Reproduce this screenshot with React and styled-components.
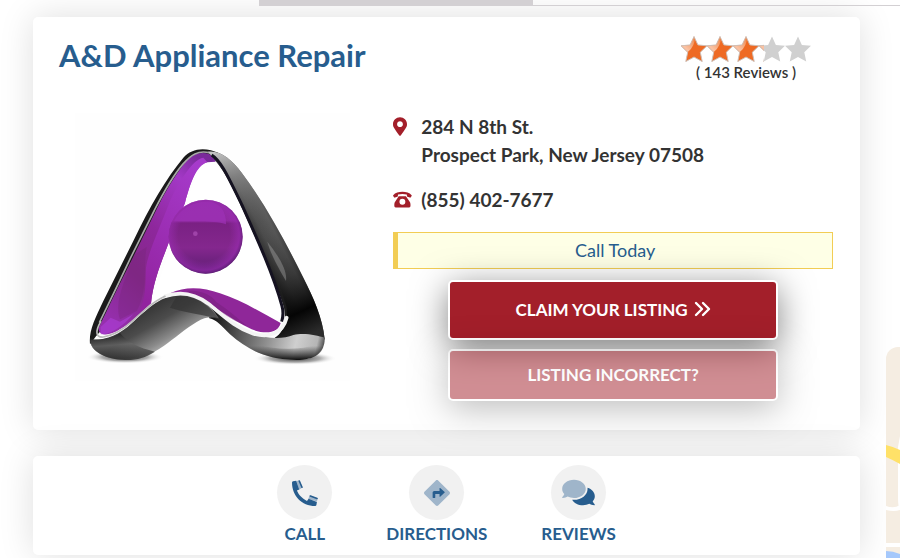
import React from "react";
import styled, { createGlobalStyle, css } from "styled-components";
import { FaMapMarkerAlt } from "react-icons/fa";

const STAR = "M12 0.5 L15.6 8.2 L24 9.1 L17.8 15 L19.6 23.6 L12 19.4 L4.4 23.6 L6.2 15 L0 9.1 L8.4 8.2 Z";

const Star = ({ index, fill }) => (
  <svg width="26" height="26" viewBox="0 0 24 24" aria-hidden="true">
    <defs>
      <linearGradient id={`shine${index}`} x1="0.8" y1="0" x2="0" y2="1">
        <stop offset="0" stopColor="#f0874a" />
        <stop offset="0.6" stopColor="#fac3a4" />
        <stop offset="1" stopColor="#f5a57c" />
      </linearGradient>
      <clipPath id={`part${index}`}>
        <rect x="-1" y="0" width={fill * 26} height="25" />
      </clipPath>
      <clipPath id={`star${index}`}>
        <path d={STAR} />
      </clipPath>
    </defs>
    <path d={STAR} fill="#d0d0d0" />
    <g clipPath={`url(#part${index})`}>
      <path d={STAR} fill="#ee6a24" />
      <g clipPath={`url(#star${index})`}>
        <path d="M-1 0 H13 Q13 10 6 15 L-1 17 Z" fill={`url(#shine${index})`} />
      </g>
      <path d={STAR} fill="none" stroke="#cfc0b8" strokeWidth="0.9" />
    </g>
  </svg>
);

const PhoneRotary = () => (
  <svg width="19" height="17" viewBox="0 0 20 17" aria-hidden="true">
    <path
      fill="currentColor"
      fillRule="evenodd"
      d="M6 5.2H13.6L17.4 10.6Q18.4 12 18.4 13.4V15.3Q18.4 16.8 17 16.8H2.8Q1.4 16.8 1.4 15.3V13.4Q1.4 12 2.4 10.6ZM9.9 7.7A3.1 3.1 0 1 0 9.9 13.9A3.1 3.1 0 1 0 9.9 7.7Z"
    />
    <path
      fill="currentColor"
      d="M0.2 3.9C4.6-0.7 15.2-0.7 19.6 3.9Q19.9 4.3 19.6 4.8L18.7 6.2Q18.3 6.7 17.7 6.5L15.2 5.5Q14.7 5.2 14.7 4.7L14.5 3.3Q9.9 1.9 5.3 3.3L5.1 4.7Q5.1 5.2 4.6 5.5L2.1 6.5Q1.5 6.7 1.1 6.2L0.2 4.8Q-0.1 4.3 0.2 3.9Z"
    />
  </svg>
);

const Chevrons = () => (
  <svg width="17" height="16" viewBox="0 0 17 16" fill="none" stroke="currentColor" strokeWidth="2.4" strokeLinecap="round" strokeLinejoin="round" aria-hidden="true">
    <path d="M2 2L8 8L2 14M9 2L15 8L9 14" />
  </svg>
);

const CallIcon = () => (
  <svg width="26" height="26" viewBox="0 0 26 26" aria-hidden="true">
    <path fill="#9fb5ca" d="M4.4 1L7.4 0.4L10.6 7.6L7 9.8ZM16.4 19L17.6 15.2L25.6 18.2L25 21.6Z" />
    <path
      fill="#275d8e"
      d="M1 1.3L4.2 0.7L7.2 9.4L4.9 10.6C6.6 14.9 10.6 19 15 20.9L16.6 18.8L24.9 22L24.4 25Q24.2 26 23.2 26C9.6 26 0 15.7 0 2.5Q0 1.6 1 1.3Z"
    />
    <path stroke="#275d8e" strokeWidth="1.6" strokeLinecap="round" d="M7.3 1L10 7.2M18.4 16L25 18.4" />
  </svg>
);

const DirectionsIcon = () => (
  <svg width="26" height="26" viewBox="0 0 512 512" aria-hidden="true">
    <path
      fill="#9fb5ca"
      d="M502.6 233.3L278.7 9.4c-12.5-12.5-32.8-12.5-45.4 0L9.4 233.3c-12.5 12.5-12.5 32.8 0 45.4l223.9 223.9c12.5 12.5 32.8 12.5 45.4 0l223.9-223.9c12.5-12.5 12.5-32.8 0-45.4z"
    />
    <path
      fill="#275d8e"
      d="M407 246l-88 84c-5 5-13 1-13-6V276h-84v68c0 5-3 8-8 8h-36c-5 0-8-3-8-8v-96c0-18 14-32 32-32h104v-52c0-7 8-11 13-6l88 76c4 3 4 9 0 12z"
    />
  </svg>
);

const ReviewsIcon = () => (
  <svg width="33" height="29" viewBox="0 0 576 512" aria-hidden="true">
    <path
      fill="#9fb5ca"
      d="M416 192c0-88.4-93.1-160-208-160S0 103.6 0 192c0 34.3 14.1 65.9 38 92-13.4 30.2-35.5 54.2-35.8 54.5-2.2 2.3-2.8 5.7-1.5 8.7S4.8 352 8 352c36.6 0 66.9-12.3 88.7-25 32.2 15.7 70.3 25 111.3 25 114.9 0 208-71.6 208-160z"
    />
    <path
      fill="#275d8e"
      d="M538 412c23.9-26 38-57.7 38-92 0-66.9-53.5-124.2-129.3-148.1.9 6.6 1.3 13.3 1.3 20.1 0 105.9-107.7 192-240 192-10.8 0-21.3-.8-31.7-1.9C207.8 439.6 281.8 480 368 480c41 0 79.1-9.2 111.3-25 21.8 12.7 52.1 25 88.7 25 3.2 0 6.1-1.9 7.3-4.8 1.3-2.9.7-6.3-1.5-8.7-.3-.2-22.4-24.2-35.8-54.5z"
    />
  </svg>
);

const CompanyLogo = () => (
  <svg width="280" height="268" viewBox="0 6 840 804" role="img" aria-label="A&D Appliance Repair logo">
    <defs>
      <linearGradient id="leftPurple" x1="0.8" y1="0" x2="0.2" y2="1">
        <stop offset="0" stopColor="#7a2a9a" />
        <stop offset="0.15" stopColor="#a338c6" />
        <stop offset="0.45" stopColor="#8e279c" />
        <stop offset="0.7" stopColor="#842889" />
        <stop offset="1" stopColor="#962fae" />
      </linearGradient>
      <linearGradient id="bandGlow" x1="0.7" y1="0" x2="0.3" y2="1">
        <stop offset="0" stopColor="#a63acb" />
        <stop offset="1" stopColor="#92239f" />
      </linearGradient>
      <linearGradient id="rightBand" gradientUnits="userSpaceOnUse" x1="560" y1="400" x2="650" y2="355">
        <stop offset="0" stopColor="#1c1c1c" />
        <stop offset="0.3" stopColor="#4c4c4c" />
        <stop offset="0.65" stopColor="#5e5e5e" />
        <stop offset="1" stopColor="#242424" />
      </linearGradient>
      <linearGradient id="rightShade" gradientUnits="userSpaceOnUse" x1="440" y1="120" x2="700" y2="680">
        <stop offset="0" stopColor="#c4c4c4" />
        <stop offset="0.15" stopColor="#8c8c8c" stopOpacity="0.8" />
        <stop offset="0.4" stopColor="#555" stopOpacity="0.3" />
        <stop offset="0.7" stopColor="#222" stopOpacity="0.6" />
        <stop offset="0.88" stopColor="#050505" />
        <stop offset="1" stopColor="#2b2b2b" />
      </linearGradient>
      <linearGradient id="rightFoot" gradientUnits="userSpaceOnUse" x1="430" y1="620" x2="765" y2="700">
        <stop offset="0" stopColor="#161616" />
        <stop offset="0.25" stopColor="#555" />
        <stop offset="0.5" stopColor="#8f8f8f" />
        <stop offset="0.75" stopColor="#cfcfcf" />
        <stop offset="0.93" stopColor="#b5b5b5" />
        <stop offset="1" stopColor="#444" />
      </linearGradient>
      <linearGradient id="footUnder" x1="0" y1="0" x2="0" y2="1">
        <stop offset="0.45" stopColor="#222" stopOpacity="0" />
        <stop offset="1" stopColor="#0c0c0c" />
      </linearGradient>
      <linearGradient id="wave" gradientUnits="userSpaceOnUse" x1="210" y1="580" x2="290" y2="720">
        <stop offset="0" stopColor="#2e2e2e" />
        <stop offset="0.45" stopColor="#4c4c4c" />
        <stop offset="0.8" stopColor="#8b8b8b" />
        <stop offset="1" stopColor="#bbb" />
      </linearGradient>
      <linearGradient id="leftFoot" x1="0" y1="0" x2="0.2" y2="1">
        <stop offset="0" stopColor="#000" />
        <stop offset="0.5" stopColor="#6a6a6a" />
        <stop offset="1" stopColor="#0a0a0a" />
      </linearGradient>
      <linearGradient id="ball" x1="0" y1="0" x2="0" y2="1">
        <stop offset="0" stopColor="#8e2ba0" />
        <stop offset="0.28" stopColor="#902aa0" />
        <stop offset="0.32" stopColor="#7a2183" />
        <stop offset="0.65" stopColor="#84278e" />
        <stop offset="1" stopColor="#5a1d70" />
      </linearGradient>
      <radialGradient id="ballEdge" cx="0.48" cy="0.48" r="0.54">
        <stop offset="0.65" stopColor="#9a2db2" stopOpacity="0" />
        <stop offset="0.88" stopColor="#9a2cb2" stopOpacity="0.6" />
        <stop offset="1" stopColor="#4c1a66" stopOpacity="0.7" />
      </radialGradient>
      <radialGradient id="ground">
        <stop offset="0" stopColor="#222" />
        <stop offset="0.6" stopColor="#777" stopOpacity="0.6" />
        <stop offset="1" stopColor="#fff" stopOpacity="0" />
      </radialGradient>
    </defs>

    <rect x="16" y="6" width="824" height="804" fill="#fefefe" />
    <ellipse cx="165" cy="738" rx="115" ry="20" fill="url(#ground)" />
    <ellipse cx="675" cy="742" rx="125" ry="20" fill="url(#ground)" />

    <path
      fill="#1a1a1a"
      d="M340 140C365 112 405 106 450 128L425 150C395 150 375 165 352 210L110 640L78 676L60 700C56 660 74 625 100 570L190 390C240 285 290 200 340 140Z"
    />
    <path
      fill="#fff"
      d="M432 150C400 146 378 185 345 290L243 577C300 535 340 526 390 532C460 538 545 590 625 632C640 620 638 585 630 560C590 430 500 250 432 150Z"
    />
    <path
      fill="url(#leftPurple)"
      d="M440 142C405 116 370 124 346 154C310 200 285 245 262 290L190 437C150 515 115 590 86 650C84 676 118 676 150 655C180 640 215 605 243 577C250 505 280 440 296 395C315 360 335 300 345 275C362 215 378 160 412 154L436 152Z"
    />
    <path fill="url(#bandGlow)" d="M400 140C365 145 320 225 300 270C270 350 235 420 228 470C225 520 230 560 205 605L243 577C250 505 280 440 296 395C320 350 335 300 345 275C362 215 378 165 412 154Z" />
    <path fill="#762479" opacity="0.35" d="M192 432L230 408C218 470 235 540 200 600L150 625C130 570 170 500 192 432Z" />
    <path fill="#ad40d7" opacity="0.6" d="M92 648L122 620L150 632L190 610C160 645 120 672 92 670Z" />
    <path fill="none" stroke="#a8a8a8" strokeWidth="5" d="M420 126C385 116 362 132 338 160C300 205 275 255 252 300L182 440C150 508 115 580 88 635" />

    <circle cx="407" cy="377" r="111" fill="url(#ball)" />
    <path fill="#a233bc" opacity="0.6" d="M312 331C332 290 375 270 420 272C448 276 470 300 468 340C440 328 380 333 312 331Z" />
    <circle cx="407" cy="377" r="111" fill="url(#ballEdge)" />
    <circle cx="376" cy="368" r="7" fill="#b558c0" opacity="0.6" />

    <path
      fill="#8f2799"
      d="M300 547C350 524 400 530 450 547C510 566 570 602 632 636C625 665 590 672 545 655C480 627 425 572 350 547Z"
    />
    <path fill="#6d1e74" opacity="0.4" d="M350 540C390 535 425 552 438 572C480 600 500 620 530 644C470 625 430 580 350 547Z" />

    <path
      fill="url(#rightBand)"
      d="M412 122C450 116 485 145 515 185C590 285 650 400 700 500C730 560 758 620 764 685C740 700 640 700 610 684C640 665 650 640 642 590C625 530 570 410 520 300C490 235 462 170 412 122Z"
    />
    <path
      fill="url(#rightShade)"
      d="M412 122C450 116 485 145 515 185C590 285 650 400 700 500C730 560 758 620 764 685C740 700 640 700 610 684C640 665 655 640 650 590C635 530 575 410 525 300C495 235 462 165 412 122Z"
    />
    <path fill="#bbb" opacity="0.35" d="M592 392C630 440 652 480 648 510C630 480 602 430 592 392Z" />
    <path fill="none" stroke="#151221" strokeWidth="9" d="M425 132C455 150 480 210 515 280C560 380 610 490 636 585C640 600 640 615 635 632" />

    <path
      fill="url(#rightFoot)"
      d="M400 570C440 590 480 640 535 664C590 686 640 684 670 672C700 664 740 672 764 680C766 722 735 747 680 747C590 745 535 718 480 670C455 645 440 626 418 622Z"
    />
    <path
      fill="url(#footUnder)"
      d="M480 670C560 715 690 730 764 690C764 724 735 747 680 747C590 745 535 718 480 670Z"
    />

    <path
      fill="url(#wave)"
      d="M62 686C100 690 145 675 185 637C240 585 285 545 345 552C390 556 420 580 446 622C425 616 405 618 380 633C310 675 250 750 165 747C110 746 58 720 62 686Z"
    />
    <path fill="#333" opacity="0.7" d="M320 556C380 552 415 580 452 628C420 612 370 612 300 590Z" />
    <path
      fill="url(#leftFoot)"
      d="M60 682C95 690 130 680 150 666C175 695 205 710 255 722C225 740 200 748 165 747C110 746 56 722 60 682Z"
      opacity="0.6"
    />
    <path
      fill="none"
      stroke="#f4f4f4"
      strokeWidth="11"
      strokeLinecap="round"
      d="M285 556C330 540 375 548 415 578C460 614 495 650 550 668C600 682 638 666 650 620"
    />
    <path fill="none" stroke="#bbb" strokeWidth="5" strokeLinecap="round" d="M92 632C76 660 76 680 100 678C128 674 160 655 185 632C220 600 250 572 285 556" />
  </svg>
);

const MapPreview = () => (
  <svg width="100%" height="100%" viewBox="0 0 14 211" preserveAspectRatio="xMinYMin slice" aria-hidden="true">
    <rect width="14" height="211" fill="#f5ede2" />
    <path d="M14 89V163Q12 160 12 150V100Z" fill="#fff" />
    <path d="M0 159Q8 162 14 158V163Q8 165 0 163ZM0 196H14V200H0Z" fill="#fff" />
    <path d="M0 98Q8 100 14 103V117Q7 113 0 110Z" fill="#ffe168" />
    <path d="M0 204Q7 204 14 207V211H0Z" fill="#a5c8fb" />
  </svg>
);

const actions = [
  { label: "CALL", icon: <CallIcon /> },
  { label: "DIRECTIONS", icon: <DirectionsIcon /> },
  { label: "REVIEWS", icon: <ReviewsIcon /> },
];

const App = () => {
  return (
    <>
      <GlobalStyle />
      <TopBar>
        <ActiveTab />
        <TabLine />
      </TopBar>
      <Page>
        <Main>
          <Card>
            <CardHeader>
              <Title>A&amp;D Appliance Repair</Title>
              <Rating>
                <Stars role="img" aria-label="3.2 out of 5 stars">
                  {[1, 1, 1, 0.22, 0].map((fill, i) => (
                    <Star key={i} index={i} fill={fill} />
                  ))}
                </Stars>
                <ReviewCount>( 143 Reviews )</ReviewCount>
              </Rating>
            </CardHeader>
            <CardBody>
              <LogoWrapper>
                <CompanyLogo />
              </LogoWrapper>
              <div>
                <ContactList>
                  <ContactRow>
                    <ContactIcon>
                      <Pin />
                    </ContactIcon>
                    <Address>
                      284 N 8th St.
                      <br />
                      Prospect Park, New Jersey 07508
                    </Address>
                  </ContactRow>
                  <ContactRow>
                    <ContactIcon>
                      <PhoneRotary />
                    </ContactIcon>
                    <PhoneLink href="tel:8554027677">(855) 402-7677</PhoneLink>
                  </ContactRow>
                </ContactList>
                <Callout>Call Today</Callout>
                <Buttons>
                  <ListingButton type="button">
                    CLAIM YOUR LISTING <Chevrons />
                  </ListingButton>
                  <ListingButton type="button" $muted>
                    LISTING INCORRECT?
                  </ListingButton>
                </Buttons>
              </div>
            </CardBody>
          </Card>
          <ActionCard>
            {actions.map(({ label, icon }) => (
              <Action key={label} href={`#${label.toLowerCase()}`}>
                <ActionIcon>{icon}</ActionIcon>
                {label}
              </Action>
            ))}
          </ActionCard>
        </Main>
        <Side>
          <MapPreview />
        </Side>
      </Page>
    </>
  );
};

const GlobalStyle = createGlobalStyle`
  * {
    box-sizing: border-box;
  }

  body {
    margin: 0;
    background: #fff;
    color: #333;
    font-family: Lato, "Open Sans", sans-serif;
    overflow-x: hidden;
  }
`;

const TopBar = styled.div`
  position: relative;
  z-index: 1;
  display: flex;
  height: 6px;
  padding-left: 259px;
`;

const ActiveTab = styled.div`
  width: 274px;
  background: #d3d0d3;
`;

const TabLine = styled.div`
  flex: 1;
  border-bottom: 1px solid #d3d0d3;
`;

const Page = styled.div`
  display: flex;
  gap: 26px;
  padding: 11px 0 0 33px;
`;

const Main = styled.main`
  flex: 1;
  display: flex;
  flex-direction: column;
  gap: 26px;
`;

const Card = styled.section`
  padding: 19px 27px 29px 26px;
  border-radius: 5px;
  background: #fff;
  box-shadow: 0 0 35px rgba(0, 0, 0, 0.13);
`;

const CardHeader = styled.header`
  display: flex;
  justify-content: space-between;
`;

const Title = styled.h1`
  margin: 0;
  color: #275d8e;
  font-size: 31px;
  font-weight: 700;
  line-height: 38px;
`;

const Rating = styled.div`
  margin-right: 22px;
  text-align: center;
`;

const Stars = styled.div`
  display: flex;
`;

const ReviewCount = styled.div`
  font-size: 15px;
  font-weight: 600;
  line-height: 20px;
`;

const CardBody = styled.div`
  display: grid;
  grid-template-columns: 11fr 16fr;
  gap: 32px;
  margin-top: 31px;
`;

const LogoWrapper = styled.div`
  display: flex;
  justify-content: center;
  align-self: start;
`;

const ContactList = styled.div`
  display: flex;
  flex-direction: column;
  gap: 17px;
`;

const ContactRow = styled.div`
  display: flex;
  font-size: 19px;
  font-weight: 700;
  line-height: 28px;
`;

const ContactIcon = styled.span`
  display: flex;
  align-items: center;
  width: 28px;
  height: 26px;
  color: #a31f2a;
`;

const Pin = styled(FaMapMarkerAlt)`
  width: 14px;
  height: 19px;
`;

const Address = styled.address`
  font-style: normal;
`;

const PhoneLink = styled.a`
  color: inherit;
  text-decoration: none;
`;

const Callout = styled.div`
  margin-top: 18px;
  border: 1px solid #f2cd54;
  border-left-width: 5px;
  background: #feffe6;
  color: #275d8e;
  font-size: 18px;
  line-height: 35px;
  text-align: center;
`;

const Buttons = styled.div`
  display: flex;
  flex-direction: column;
  align-items: center;
  gap: 9px;
  margin-top: 11px;
`;

const ListingButton = styled.button`
  display: flex;
  align-items: center;
  justify-content: center;
  gap: 6px;
  width: 75%;
  height: 60px;
  padding: 0 6px 2px;
  border: 2px solid #fff;
  border-radius: 5px;
  background: #a31f2a;
  box-shadow: 0 8px 35px rgba(0, 0, 0, 0.5);
  color: #fff;
  font-family: inherit;
  font-size: 17px;
  font-weight: 700;
  cursor: pointer;

  ${({ $muted }) =>
    $muted &&
    css`
      height: 52px;
      opacity: 0.5;
    `}
`;

const ActionCard = styled.nav`
  display: flex;
  justify-content: center;
  gap: 54px;
  padding: 9px 0 8px;
  border-radius: 5px;
  background: #fff;
  box-shadow: 0 0 35px rgba(0, 0, 0, 0.13);
`;

const Action = styled.a`
  display: flex;
  flex-direction: column;
  align-items: center;
  color: #275d8e;
  font-size: 17px;
  font-weight: 700;
  line-height: 27px;
  text-decoration: none;
`;

const ActionIcon = styled.span`
  display: flex;
  align-items: center;
  justify-content: center;
  width: 55px;
  height: 55px;
  border-radius: 50%;
  background: #f1f1f1;
`;

const Side = styled.aside`
  width: 14px;
  height: 211px;
  margin-top: 330px;
  overflow: hidden;
  border-top-left-radius: 12px;
`;

export default App;
